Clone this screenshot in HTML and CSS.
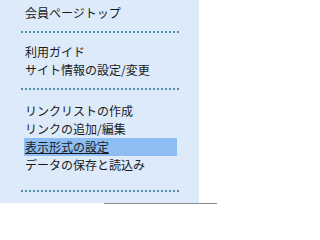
FILE: index.html
```html
<!DOCTYPE html>
<html lang="ja">
<head>
<meta charset="utf-8">
<link rel="stylesheet" href="styles.css">
</head>
<body>
<div class="page">
  <nav class="panel">
    <ul class="group first">
      <li><a href="#">会員ページトップ</a></li>
    </ul>
    <div class="sep"></div>
    <ul class="group">
      <li><a href="#">利用ガイド</a></li>
      <li><a href="#">サイト情報の設定/変更</a></li>
    </ul>
    <div class="sep"></div>
    <ul class="group last">
      <li><a href="#">リンクリストの作成</a></li>
      <li><a href="#">リンクの追加/編集</a></li>
      <li><a href="#" class="active">表示形式の設定</a></li>
      <li><a href="#">データの保存と読込み</a></li>
    </ul>
    <div class="sep"></div>
  </nav>
  <div class="bottom-rule"></div>
</div>
</body>
</html>
```

FILE: styles.css
```css
html, body {
  margin: 0;
  padding: 0;
  background: #ffffff;
}
body {
  font-family: "Noto Sans CJK JP", "Liberation Sans", sans-serif;
  font-size: 12px;
  color: #1a1a1a;
}
.page {
  width: 217px;
  height: 204px;
  display: flex;
  flex-direction: column;
}
.panel {
  width: 199px;
  height: 203px;
  background: #ddeafa;
  display: flex;
  flex-direction: column;
  padding-left: 21px;
  box-sizing: border-box;
}
.group {
  list-style: none;
  margin: 0;
  padding: 10px 0 9px 0;
}
.group.first {
  padding-top: 4px;
}
.group.last {
  padding-top: 12px;
  padding-bottom: 16px;
}
.group li {
  height: 18px;
  line-height: 18px;
}
.group a {
  display: block;
  width: 152px;
  margin-left: 3px;
  padding-left: 1px;
  color: #1a1a1a;
  text-decoration: none;
  white-space: nowrap;
}
.group a.active {
  background: #8dbdf3;
  text-decoration: underline;
}
.sep {
  width: 160px;
  height: 2px;
  background-image: linear-gradient(to right, #4f8eae 2px, transparent 2px);
  background-size: 4px 2px;
}
.bottom-rule {
  margin-left: 104px;
  height: 1px;
  background: #8a8a8a;
}
```
